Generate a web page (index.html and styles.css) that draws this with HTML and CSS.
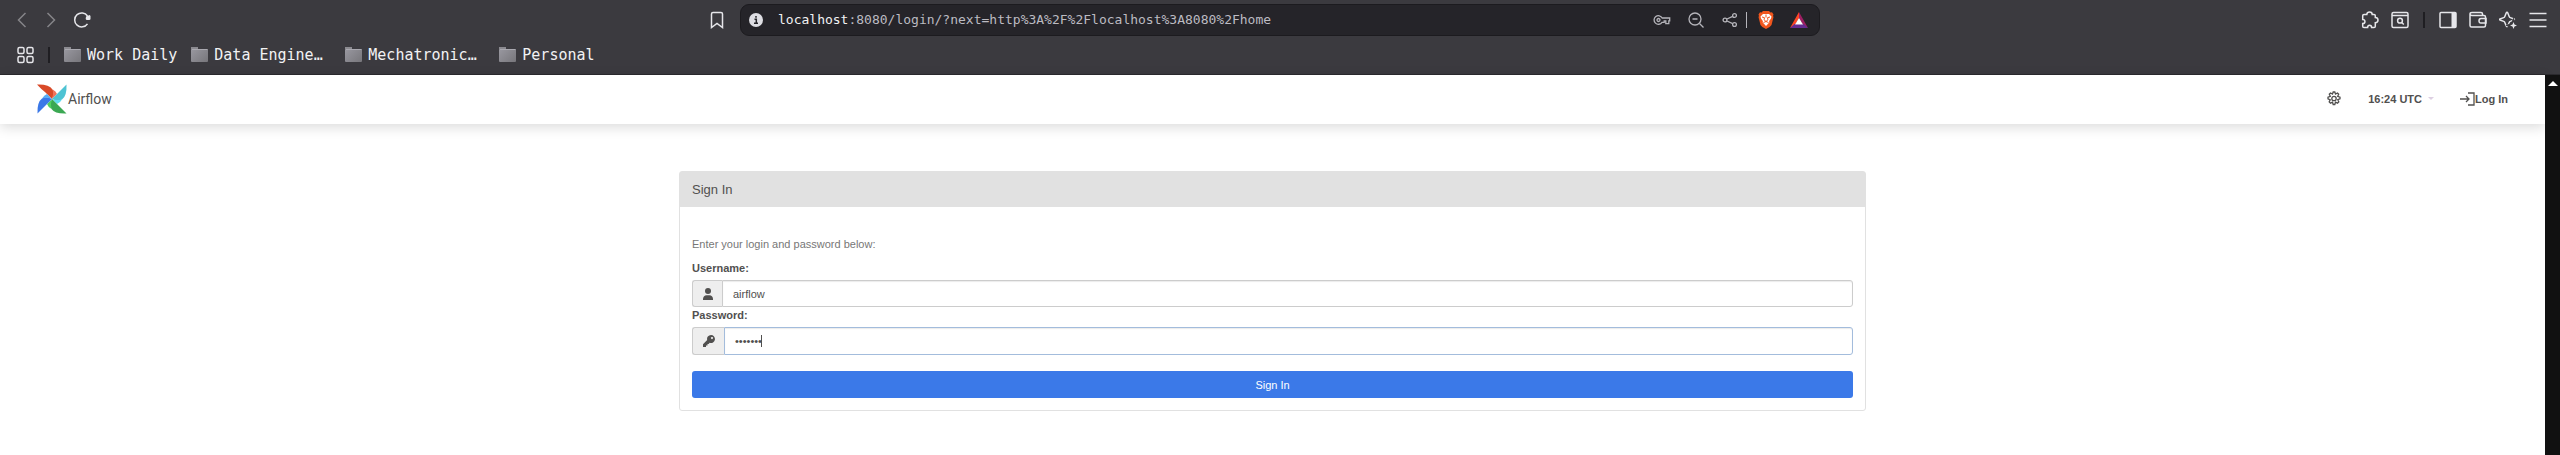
FILE: index.html
```
<!DOCTYPE html>
<html lang="en">
<head>
<meta charset="utf-8">
<title>Sign In - Airflow</title>
<link rel="stylesheet" href="styles.css">
</head>
<body>
<div class="chrome">
  <div class="toolbar">
    <div class="tools tools-left">
      <button class="tool tool-dim" aria-label="Back"><svg width="10" height="16" viewBox="0 0 10 16"><path d="M8.500 1 1.500 8l7 7"/></svg></button>
      <button class="tool tool-dim" aria-label="Forward"><svg width="10" height="16" viewBox="0 0 10 16"><path d="m1.500 1 7 7-7 7"/></svg></button>
      <button class="tool tool-reload" aria-label="Reload"><svg width="18" height="18" viewBox="0 0 18 18"><path d="M14.500 12.800A7 7 0 1 1 14.500 5"/><path class="solid" d="M13 5.500l3.700-1.500.8 1v3.200l-1 .8h-3l-.8-1z"/></svg></button>
    </div>
    <div class="address-wrap">
      <button class="tool" aria-label="Bookmark this page"><svg width="14" height="18" viewBox="0 0 14 18"><path d="M3 1.500h8q1.500 0 1.500 1.500v13.500L7 12.500l-5.500 4V3Q1.500 1.500 3 1.500z"/></svg></button>
      <div class="address">
        <button class="tool" aria-label="Site information"><svg width="16" height="16" viewBox="0 0 16 16"><circle cx="8" cy="8" r="7" fill="#dedee3" stroke="none"/><path class="dark" d="M6.500 7.300H8.300V11M6 11.300h4M8 4v1.800"/></svg></button>
        <div class="url"><span class="host">localhost</span>:8080/login/?next=http%3A%2F%2Flocalhost%3A8080%2Fhome</div>
        <div class="address-tools">
          <button class="tool tool-soft" aria-label="Passwords"><svg width="18" height="18" viewBox="0 0 18 18"><path d="M9.200 7A4.300 4.300 0 1 0 9 11.300h2.200V9.800h1.600v2.800h3V9.800h.900V7z"/><circle cx="5.500" cy="9" r="1.500"/></svg></button>
          <button class="tool tool-soft" aria-label="Zoom"><svg width="18" height="18" viewBox="0 0 18 18"><circle cx="8" cy="8" r="6"/><path d="M5.500 8h5M12.500 12.500l4 4"/></svg></button>
          <button class="tool tool-soft" aria-label="Share"><svg width="18" height="18" viewBox="0 0 18 18"><circle cx="4" cy="9" r="1.900"/><circle cx="13.500" cy="4.500" r="1.900"/><circle cx="13.500" cy="13.500" r="1.900"/><path d="m6 8 5.700-2.700M6 10l5.700 2.700"/></svg></button>
          <span class="address-divider"></span>
          <button class="tool" aria-label="Brave Shields"><svg width="16" height="18" viewBox="0 0 16 18"><path fill="#f1561d" stroke="none" d="M5 0h6l1.500 1.500L14 1.300 15.500 3.500 15 5l.5 1-2 8Q12.500 16 8 18 3.500 16 2.500 14l-2-8L1 5 .5 3.500 2 1.300l1.500.2z"/><path fill="#fff" stroke="none" d="M5 3h6l2.500 2.500-.5 2-2 2.800.5 1L8 15l-3.500-3.700.5-1L3 7.500l-.5-2z"/><path class="mane" d="m4 6 2.500.7-.5 2 2 1.800 2-1.800-.5-2L12 6M5.500 11.500 8 10.500l2.500 1M8 3.500v3"/></svg></button>
          <button class="tool" aria-label="Brave Rewards"><svg width="18" height="16" viewBox="0 0 18 16"><path fill="#ff4724" stroke="none" d="M9 0 0 16l5-3 4-7z"/><path fill="#9e1f63" stroke="none" d="m9 0 9 16-5-3-4-7z"/><path fill="#662d91" stroke="none" d="M0 16h18l-4.500-4h-9z"/><path fill="#fff" stroke="none" d="m9 6 4 6.500H5z"/></svg></button>
        </div>
      </div>
    </div>
    <div class="tools tools-right">
      <button class="tool" aria-label="Extensions"><svg width="18" height="18" viewBox="0 0 18 18"><path d="M3 3.500h2.800C5.800 1.800 7 1 8.500 1s2.700.8 2.700 2.500H13q1.300 0 1.300 1.300v1.700c1.700 0 2.700 1.100 2.700 2.600s-1 2.600-2.700 2.600v3.500q0 1.300-1.300 1.300h-2.400c0-3-4-3-4 0H3q-1.300 0-1.300-1.300v-2.600c3 0 3-4.200 0-4.200V4.800Q1.700 3.500 3 3.500z"/></svg></button>
      <button class="tool" aria-label="Search tabs"><svg width="18" height="18" viewBox="0 0 18 18"><rect x="1" y="1.500" width="16" height="15" rx="1.500"/><path d="M1 4.500h16"/><circle cx="9" cy="9.700" r="2.400"/><path d="m10.800 11.500 2 2"/></svg></button>
      <span class="divider"></span>
      <button class="tool" aria-label="Sidebar"><svg width="18" height="18" viewBox="0 0 18 18"><rect x="1" y="1.500" width="16" height="15" rx="1"/><path class="solid" d="M12.500 2H17v14h-4.500z"/></svg></button>
      <button class="tool" aria-label="Wallet"><svg width="18" height="18" viewBox="0 0 18 18"><path d="M13.500 4.500V3q0-1.500-1.500-1.500H3Q1 1.500 1 3t2 1.500h12q1.500 0 1.500 1.500v8.500q0 1.500-1.500 1.500H2.500Q1 16 1 14.500V3"/><path d="M17 7.500h-5q-2 0-2 2.300t2 2.200h5z"/></svg></button>
      <button class="tool" aria-label="Assistant"><svg width="18" height="18" viewBox="0 0 18 18"><path d="M8 1.200q.5 0 .8.800l1.400 3.500q.3.800 1.100 1.100L15 8q.8.500 0 1l-3.700 1.400q-.8.300-1.100 1.100L8.800 15q-.8 1.500-1.600 0l-1.400-3.500q-.3-.8-1.100-1.100L1 9Q.2 8.500 1 8l3.700-1.400q.8-.3 1.100-1.100L7.200 2q.3-.8.800-.8z"/><path class="gap" d="m14.500 11.500.9 2.100 2.100.9-2.100.9-.9 2.100-.9-2.100-2.100-.9 2.100-.9z"/><path class="solid" d="m14.500 11 1 2.500 2.500 1-2.500 1-1 2.500-1-2.500-2.500-1 2.500-1z"/></svg></button>
      <button class="tool" aria-label="Menu"><svg width="18" height="16" viewBox="0 0 18 16"><path d="M.5 1.500h17M.5 8h17M.5 14.500h17"/></svg></button>
    </div>
  </div>
  <nav class="bookmarks" aria-label="Bookmarks">
    <button class="tool" aria-label="Apps"><svg width="17" height="18" viewBox="0 0 17 18"><rect x="1" y="1.500" width="6" height="6" rx="1.500"/><rect x="10" y="1.500" width="6" height="6" rx="1.500"/><rect x="1" y="10.500" width="6" height="6" rx="1.500"/><rect x="10" y="10.500" width="6" height="6" rx="1.500"/></svg></button>
    <span class="divider"></span>
    <button class="bookmark"><span class="folder"></span>Work Daily</button>
    <button class="bookmark bookmark-long"><span class="folder"></span>Data Engine…</button>
    <button class="bookmark bookmark-long"><span class="folder"></span>Mechatronic…</button>
    <button class="bookmark"><span class="folder"></span>Personal</button>
  </nav>
</div>
<div class="viewport">
  <div class="page">
    <header class="navbar">
      <a class="brand" href="#">
        <svg width="30" height="30" viewBox="0 0 30 30"><path fill="#d94a28" d="M0 .5Q12 0 15.500 5.500 18 9 15 15 11 11 8.500 8.500 4 5 0 .5z"/><path fill="#f0735a" d="M15.800 5.500Q19 7 20 10L15 15Q17 10 15.800 5.500z"/><path fill="#4ec3d3" d="M29.500.5Q30 12 25 15.500 21 18 15 15 19 11 21.500 8.500 26 4 29.500.5z"/><path fill="#5fdcf0" d="M25 15.500Q23 19 20 20L15 15q5 2 10 .5z"/><path fill="#3ba853" d="M29.500 29.500Q18 30 14.500 25 12 21 15 15q4 4 6.500 6.500 4 4 8 8z"/><path fill="#4fd05f" d="M14.500 25Q11 23 10 20l5-5q-2 5-.5 10z"/><path fill="#3b78e7" d="M.5 29.500Q0 18 5 14.500 9 12 15 15q-4 4-6.500 6.500-4 4-8 8z"/><path fill="#57aef5" d="M5 14.500Q7 11 10 10l5 5q-5-2-10-.5z"/></svg>
        <span>Airflow</span>
      </a>
      <div class="nav-right">
        <button class="nav-item" aria-label="Theme"><svg width="16" height="16" viewBox="0 0 16 16"><path d="m6.500 3 .7-2h1.600l.7 2 2-1 1.200 1.200-1 2.100 2.300.8v1.800l-2.200.8 1 2.100-1.300 1.300-2-1-.7 2.400H7.200l-.7-2.300-2 1-1.300-1.300 1-2.100-2.200-.9V6.100l2.300-.8-1-2.100L4.500 2z"/><circle cx="8" cy="7.500" r="2.200"/></svg></button>
        <button class="nav-item clock">16:24 UTC<span class="caret"></span></button>
        <a class="nav-item" href="#"><svg width="15" height="14" viewBox="0 0 15 14"><path d="M0 7h9M6 4l3 3-3 3M8 1h6v12H8"/></svg>Log In</a>
      </div>
    </header>
    <main class="main">
      <section class="card">
        <h1 class="card-title">Sign In</h1>
        <form class="card-body">
          <p class="help">Enter your login and password below:</p>
          <label for="username">Username:</label>
          <div class="field">
            <span class="addon"><svg width="10" height="12" viewBox="0 0 10 12"><circle cx="5" cy="3" r="3"/><path d="M0 12V10.500Q.5 7.500 3.500 7.300h3q3 .2 3.500 3.200V12z"/></svg></span>
            <input id="username" type="text" value="airflow">
          </div>
          <label for="password">Password:</label>
          <div class="field field-active">
            <span class="addon addon-wide"><svg width="12" height="12" viewBox="0 0 12 12"><path fill-rule="evenodd" d="M8 0a4 4 0 1 1-1.300 7.800L5.600 9H4.500v1.500H3V12H0V9.300l4.200-4.200A4 4 0 0 1 8 0zm1 2a1 1 0 1 0 .01 0z"/></svg></span>
            <input id="password" type="password" value="airflow">
            <span class="cursor"></span>
          </div>
          <button class="submit" type="button">Sign In</button>
        </form>
      </section>
    </main>
  </div>
  <div class="scrollbar"><span class="scroll-up"></span></div>
</div>
</body>
</html>
```

FILE: styles.css
```
* { box-sizing: border-box; }
body {
  margin: 0;
  min-height: 100vh;
  display: flex;
  flex-direction: column;
  font: 11px/16px "Liberation Sans", Arial, sans-serif;
  color: #51504f;
  background: #fff;
}
button, input { font: inherit; color: inherit; margin: 0; }
button { padding: 0; border: 0; background: none; }
a { color: inherit; text-decoration: none; }
svg { display: block; flex: none; }

.chrome {
  background: #3b3a3f;
  border-bottom: 1px solid #2b2a2e;
  color: #f2f2f4;
  font-family: "DejaVu Sans Mono", monospace;
}
.toolbar {
  display: grid;
  grid-template-columns: 1fr minmax(0, 1110px) 1fr;
  align-items: center;
  height: 40px;
}
.tool { display: flex; align-items: center; color: #e6e6ea; }
.tool svg { fill: none; stroke: currentColor; stroke-width: 1.5; }
.tool .solid { fill: currentColor; stroke: none; }
.tool .gap { fill: #3b3a3f; stroke: #3b3a3f; stroke-width: 4; }
.tool .dark { stroke: #252429; }
.tool .mane { stroke: #f1561d; stroke-width: 1; }
.tool-dim { color: #858489; }
.tool-soft { color: #b5b4ba; }
.tool-soft svg { stroke-width: 1.3; }
.tools { display: flex; align-items: center; }
.tools-left { gap: 19px; padding-left: 17px; }
.tool-reload { margin-left: -2px; }
.tools-right { gap: 12px; padding-right: 13px; justify-content: flex-end; }
.divider { width: 2px; height: 16px; background: #1f1e22; }
.tools-right .divider { margin: 0 2px; }
.address-wrap { display: flex; align-items: center; gap: 16px; margin-left: -15px; margin-right: 15px; }
.address {
  flex: 1;
  display: flex;
  align-items: center;
  height: 32px;
  padding: 0 11px 0 7px;
  border: 1px solid #1c1b1f;
  border-radius: 9px;
  background: #252429;
}
.url { flex: 1; padding-left: 14px; font-size: 13px; color: #bcbbc2; }
.host { color: #f2f2f4; }
.address-tools { display: flex; align-items: center; gap: 16px; }
.address-divider { width: 1px; height: 16px; margin: 0 -5px 0 -9px; background: #b5b4ba; }

.bookmarks { display: flex; align-items: center; height: 34px; padding: 0 17px 4px; font-size: 15px; }
.bookmarks .divider { margin: 0 14px; }
.bookmark { display: flex; align-items: center; gap: 6px; margin-right: 14px; white-space: nowrap; }
.bookmark-long { width: 140px; }
.folder {
  position: relative;
  width: 17px;
  height: 13px;
  border-radius: 1px;
  background: linear-gradient(135deg, #98979f, #77767b);
  border-top: 1px solid #aaa9b0;
}
.folder::before { content: ""; position: absolute; left: 0; top: -3px; width: 7px; height: 2px; background: #8b8a90; }

.viewport { flex: 1; display: flex; }
.page { flex: 1; display: flex; flex-direction: column; }
.scrollbar { width: 15px; padding-top: 6px; background: #111; }
.scroll-up { display: block; width: 0; margin: 0 auto; border: 5px solid transparent; border-top: 0; border-bottom-color: #fff; }

.navbar {
  display: flex;
  align-items: center;
  justify-content: space-between;
  height: 49px;
  padding: 0 37px 2px;
  box-shadow: 0 3px 12px rgba(0, 0, 0, 0.15);
}
.brand { display: flex; align-items: center; gap: 1px; font: 14px/16px Roboto, sans-serif; }
.nav-right { display: flex; align-items: center; gap: 26px; font-weight: bold; }
.nav-item { display: flex; align-items: center; }
.nav-item svg { fill: none; stroke: #51504f; stroke-width: 1.3; }
.clock { gap: 6px; }
.caret { border: 3px solid transparent; border-top-color: #ddd0e2; border-bottom: 0; }

.main { padding: 47px 24px 0; }
.card { max-width: 1187px; margin: 0 auto; border: 1px solid #e1e1e1; border-radius: 3px; }
.card-title { margin: 0; padding: 10px 12px 9px; background: #e1e1e1; font-size: 13px; line-height: 16px; font-weight: normal; }
.card-body { padding: 29px 12px 12px; }
.help { margin: 0 0 8px; color: #777; }
label { display: block; margin-bottom: 4px; font-weight: bold; }
.field { position: relative; display: flex; height: 27px; }
.field-active { height: 28px; }
.addon {
  display: flex;
  align-items: center;
  justify-content: center;
  width: 30px;
  border: 1px solid #ccc;
  border-right: 0;
  border-radius: 3px 0 0 3px;
  background: #eee;
}
.addon-wide { width: 32px; }
.addon svg { fill: #51504f; }
.field input {
  flex: 1;
  min-width: 0;
  padding: 0 10px;
  border: 1px solid #ccc;
  border-radius: 0 3px 3px 0;
  outline: 0;
  background: #fff;
  box-shadow: inset 0 1px 1px rgba(0, 0, 0, 0.08);
}
.field-active input { border-color: #a3bcdc; }
.cursor { position: absolute; left: 69px; top: 8px; width: 1px; height: 12px; background: #51504f; }
.submit {
  display: block;
  width: 100%;
  height: 27px;
  margin-top: 16px;
  border-radius: 3px;
  background: #3b79e8;
  color: #fff;
}
```
